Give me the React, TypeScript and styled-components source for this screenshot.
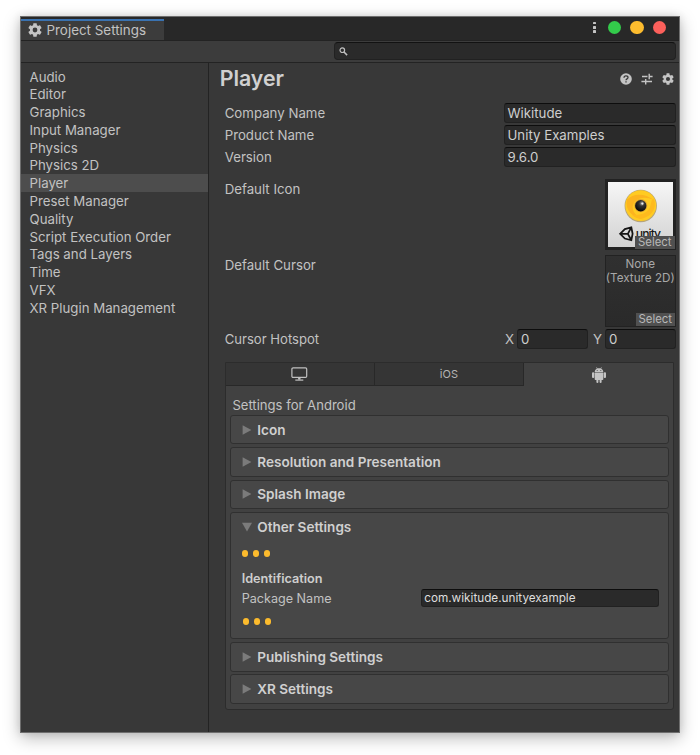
import React from 'react';
import styled, { createGlobalStyle } from 'styled-components';

const GlobalStyle = createGlobalStyle`
  *, *::before, *::after { box-sizing: border-box; }
  html, body { margin: 0; background: #fff; }
  body {
    height: 755px;
    overflow: hidden;
    font-family: Inter, sans-serif;
    font-size: 13.25px;
    color: #c2c2c2;
    -webkit-font-smoothing: antialiased;
  }
  svg { display: block; flex: none; }
`;

const Desktop = styled.div`
  height: 755px;
  padding: 16px 20px 22px;
`;

const Window = styled.main`
  width: 660px;
  height: 717px;
  display: flex;
  flex-direction: column;
  background: #383838;
  border: 1px solid #6e6e6e;
  box-shadow: 0 5px 16px rgba(0, 0, 0, 0.27), 0 0 8px rgba(0, 0, 0, 0.1);
`;

const TitleBar = styled.header`
  height: 22.5px;
  flex: none;
  display: flex;
  justify-content: space-between;
  align-items: flex-end;
  background: #282828;
`;

const WindowTab = styled.div`
  width: 143px;
  height: 20.5px;
  display: flex;
  align-items: center;
  gap: 4.5px;
  padding-left: 7px;
  background: #3c3c3c;
  border-top: 2px solid #3a72b0;
  font-size: 13.4px;
`;

const WindowControls = styled.div`
  height: 23px;
  display: flex;
  align-items: center;
  gap: 9px;
  padding: 0 13px 1.5px 0;
`;

const ControlDot = styled.span<{ $color: string }>`
  width: 13.4px;
  height: 13.4px;
  border-radius: 50%;
  background: ${(p) => p.$color};
`;

const MenuDots = styled.span`
  display: flex;
  flex-direction: column;
  gap: 1.6px;
  margin-right: 3px;
`;

const MenuDot = styled.span`
  width: 2.6px;
  height: 2.6px;
  border-radius: 0.6px;
  background: #c4c4c4;
`;

const Toolbar = styled.div`
  height: 23px;
  flex: none;
  display: flex;
  justify-content: flex-end;
  padding: 1.5px 3px 0 0;
  background: #3c3c3c;
  border-top: 1px solid #232323;
  border-bottom: 1px solid #232323;
`;

const SearchField = styled.div`
  width: 342.5px;
  height: 18px;
  display: flex;
  align-items: center;
  padding: 1px 0 0 4.5px;
  border: 1px solid #212121;
  border-top-color: #121212;
  border-radius: 4px;
  background: #2a2a2a;
`;

const Body = styled.div`
  flex: 1;
  min-height: 0;
  display: flex;
`;

const Sidebar = styled.nav`
  width: 188px;
  flex: none;
  padding-top: 5px;
  border-right: 1px solid #232323;
`;

const SidebarItem = styled.div<{ $selected: boolean }>`
  height: 17.8px;
  padding-left: 8.5px;
  line-height: 18px;
  background: ${(p) => (p.$selected ? '#4d4d4d' : 'transparent')};
`;

const Content = styled.section`
  flex: 1;
  min-width: 0;
  padding: 0 3px 0 15.7px;
`;

const PageHeader = styled.div`
  height: 40.5px;
  margin-left: -5px;
  display: flex;
  justify-content: space-between;
  align-items: flex-start;
`;

const PageTitle = styled.h1`
  margin: 0;
  padding-top: 1px;
  font-size: 21.3px;
  line-height: 28px;
  font-weight: 600;
  color: #d0d0d0;
`;

const HeaderIcons = styled.div`
  display: flex;
  align-items: center;
  gap: 9px;
  padding: 10px 2.5px 0 0;
`;

const FieldRow = styled.div<{ $gap?: number }>`
  height: ${(p) => 22.2 + (p.$gap ?? 0)}px;
  display: flex;
  justify-content: space-between;
  align-items: flex-start;
`;

const FieldLabel = styled.label`
  line-height: 21px;
`;

const TextBox = styled.div<{ $width: number }>`
  width: ${(p) => p.$width}px;
  height: 19.8px;
  padding-left: 3px;
  line-height: 18.4px;
  color: #cecece;
  background: #2a2a2a;
  border: 1px solid #212121;
  border-top-color: #0d0d0d;
  border-radius: 3px;
`;

const PreviewRow = styled(FieldRow)<{ $height: number }>`
  height: ${(p) => p.$height}px;
`;

const PreviewLabel = styled(FieldLabel)`
  line-height: 20px;
`;

const Preview = styled.div`
  position: relative;
  width: 71.5px;
  height: 71.5px;
  flex: none;
  border: 1.5px solid #222;
  background: linear-gradient(#303030, #2a2a2a);
  color: #a8a8a8;
  font-size: 11.7px;
  line-height: 13.3px;
  text-align: center;
  white-space: pre-line;
`;

const PreviewArt = styled(Preview)`
  border: 3px solid #222;
`;

const EmptyText = styled.div`
  margin: 2.2px -3px 0;
`;

const SelectTag = styled.span<{ $inset: number }>`
  position: absolute;
  right: ${(p) => p.$inset}px;
  bottom: ${(p) => p.$inset}px;
  width: 39.5px;
  height: 12.6px;
  font-size: 11.4px;
  line-height: 12.6px;
  color: #b8b8b8;
  background: #505050;
`;

const HotspotRow = styled.div`
  height: 33px;
  display: flex;
  align-items: flex-start;
`;

const HotspotLabel = styled(FieldLabel)`
  width: 280.5px;
  font-size: 13.1px;
`;

const AxisLabel = styled.span`
  line-height: 20px;
  width: 12px;
`;

const AxisGap = styled.span`
  width: 5.2px;
`;

const Platforms = styled.div`
  width: 449.5px;
  height: 348.5px;
  border: 1.2px solid #2c2c2c;
  border-radius: 0 0 3px 3px;
  background: #414141;
`;

const PlatformTabs = styled.div`
  height: 23.5px;
  display: grid;
  grid-template-columns: repeat(3, 1fr);
`;

const PlatformTab = styled.div<{ $active?: boolean }>`
  display: flex;
  align-items: center;
  justify-content: center;
  font-size: 11px;
  color: #b4b4b4;
  background: ${(p) => (p.$active ? '#414141' : '#353535')};
  border-right: ${(p) => (p.$active ? '0' : '1px solid #282828')};
  border-bottom: ${(p) => (p.$active ? '0' : '1px solid #282828')};
`;

const PlatformBody = styled.div`
  padding: 7.5px 4px 0 4.3px;
`;

const PlatformTitle = styled.div`
  height: 21px;
  padding-left: 2.4px;
  font-size: 13.1px;
  line-height: 22px;
`;

const Foldout = styled.section<{ $open?: boolean }>`
  height: ${(p) => (p.$open ? 127.3 : 29.6)}px;
  margin-bottom: 2.75px;
  border: 1.2px solid #303030;
  border-radius: 3px;
  background: #474747;
`;

const FoldoutHeader = styled.h2`
  height: 27.5px;
  margin: 0;
  display: flex;
  align-items: center;
  gap: 5.6px;
  padding-left: 10.7px;
  font-size: 13.55px;
  font-weight: 600;
  color: #d0d0d0;
`;

const FoldoutBody = styled.div`
  padding: 9.7px 9.5px 0 10.7px;
  font-size: 12.6px;
`;

const Ellipsis = styled.div<{ $shift?: number }>`
  display: flex;
  gap: 4.4px;
  padding-left: ${(p) => p.$shift ?? 0}px;
`;

const EllipsisDot = styled.span`
  width: 6.6px;
  height: 6.6px;
  border-radius: 50%;
  background: #fcbb2d;
`;

const GroupTitle = styled.h3`
  margin: 13.5px 0 0;
  font-size: 12.7px;
  line-height: 18px;
  font-weight: 600;
  color: #cecece;
`;

const PackageRow = styled.div`
  height: 29.3px;
  display: flex;
  justify-content: space-between;
  align-items: flex-start;
  margin-top: 0.6px;
  line-height: 19px;
`;

const PackageBox = styled(TextBox)`
  height: 18px;
  font-size: 11.75px;
  line-height: 17.5px;
  padding-left: 2px;
  color: #dedede;
`;

const GearIcon = ({ size }: { size: number }) => (
  <svg width={size} height={size} viewBox="2 2 20 20" fill="#c4c4c4">
    <path
      fillRule="evenodd"
      d="M19.14 12.94c.04-.3.06-.61.06-.94s-.02-.64-.07-.94l2.03-1.58c.18-.14.23-.41.12-.61l-1.92-3.32c-.12-.22-.37-.29-.59-.22l-2.39.96c-.5-.38-1.03-.7-1.62-.94l-.36-2.54c-.04-.24-.24-.41-.48-.41h-3.84c-.24 0-.43.17-.47.41l-.36 2.54c-.59.24-1.13.57-1.62.94l-2.39-.96c-.22-.08-.47 0-.59.22L2.74 8.87c-.12.21-.08.47.12.61l2.03 1.58c-.05.3-.09.63-.09.94s.02.64.07.94l-2.03 1.58c-.18.14-.23.41-.12.61l1.92 3.32c.12.22.37.29.59.22l2.39-.96c.5.38 1.03.7 1.62.94l.36 2.54c.05.24.24.41.48.41h3.84c.24 0 .44-.17.47-.41l.36-2.54c.59-.24 1.13-.56 1.62-.94l2.39.96c.22.08.47 0 .59-.22l1.92-3.32c.12-.22.07-.47-.12-.61zM12 15.4A3.4 3.4 0 1 1 12 8.6a3.4 3.4 0 0 1 0 6.8z"
    />
  </svg>
);

const SearchIcon = () => (
  <svg width="9" height="9" viewBox="0 0 9 9" fill="none" stroke="#c0c0c0">
    <circle cx="3.3" cy="3.2" r="2.3" strokeWidth="1.2" />
    <path d="M5 5l3.1 3.1" strokeWidth="1.5" />
  </svg>
);

const HelpIcon = () => (
  <svg width="12" height="12" viewBox="0 0 12 12">
    <circle cx="6" cy="6" r="5.8" fill="#c4c4c4" />
    <path
      d="M4 4.7c0-1.200.900-1.900 2-1.900s2 .7 2 1.700c0 1.400-2 1.400-2 2.800M6 8.200v1.400"
      fill="none"
      stroke="#383838"
      strokeWidth="1.3"
    />
  </svg>
);

const PresetIcon = () => (
  <svg width="12" height="12" viewBox="0 0 12 12" fill="none" stroke="#c4c4c4" strokeWidth="1.4">
    <path d="M1 3.500h5.500M7.500 3.500h4.100M8.200.700v5.600M.400 8.500h3.600M5 8.500h6M4.700 5.900v5.600" />
  </svg>
);

const MonitorIcon = () => (
  <svg width="17" height="14" viewBox="0 0 17 14" fill="none" stroke="#c0c0c0">
    <rect x=".9" y=".8" width="14.8" height="9.6" rx="1.2" strokeWidth="1.2" />
    <path d="M8.3 10.4v2.2" strokeWidth="2.4" />
    <path d="M4.3 13.1h8" strokeWidth="1.2" />
  </svg>
);

const AndroidIcon = () => (
  <svg width="14" height="16" viewBox="0 0 14 16" fill="#c4c4c4">
    <path d="M2.700 5C2.700 3.500 3.600 2.300 4.900 1.700L4.200.6l.5-.3.900 1.200c.9-.3 1.900-.3 2.800 0L9.300.3l.5.3-.7 1.100C10.400 2.300 11.300 3.500 11.300 5z" />
    <path d="M2.700 5.400h8.600v6.900a.7.700 0 0 1-.7.700H9.600v1.900a1 1 0 0 1-2 0V13H6.400v1.900a1 1 0 0 1-2 0V13h-1a.7.700 0 0 1-.7-.7z" />
    <rect x="0" y="5.200" width="2.300" height="5.800" rx="1" />
    <rect x="11.700" y="5.200" width="2.300" height="5.800" rx="1" />
    <circle cx="5.200" cy="3.500" r=".5" fill="#414141" />
    <circle cx="8.800" cy="3.500" r=".5" fill="#414141" />
  </svg>
);

const FoldArrow = ({ open }: { open?: boolean }) => (
  <svg width="10" height="10" viewBox="0 0 10 10" fill="#7b7b7b">
    <path d={open ? 'M0 .8h10L5 9.400z' : 'M.600.200v9.600L9.400 5z'} />
  </svg>
);

const AppArtwork = () => (
  <svg width="65.5" height="65.5" viewBox="0 0 66 66">
    <defs>
      <linearGradient id="paper" x2="0" y2="1">
        <stop offset="0" stopColor="#f6f6f6" />
        <stop offset="1" stopColor="#d2d2d2" />
      </linearGradient>
      <radialGradient id="pupil" cx=".6" cy=".3" r=".7">
        <stop offset="0" stopColor="#a8a8a8" />
        <stop offset=".35" stopColor="#333" />
        <stop offset="1" stopColor="#080808" />
      </radialGradient>
    </defs>
    <rect width="66" height="66" fill="url(#paper)" />
    <circle cx="33" cy="24.200" r="16.300" fill="#b5a47c" />
    <circle cx="33" cy="23.800" r="15.600" fill="#ffcb22" />
    <path d="M19 18C25 11 37 11 46 18C39 15 31 15 27 20C22 26 26 34 36 38C25 36 17 29 19 18z" fill="#fcb41f" />
    <path d="M46 17c4 9-2 18-12 20-5 0-8-2-10-4 7 1 15-1 18-7 2-4 1-8 4-9z" fill="#feba1e" />
    <circle cx="33" cy="23.800" r="6.600" fill="#e0a630" />
    <circle cx="33" cy="23.900" r="5.700" fill="url(#pupil)" />
    <circle cx="34.700" cy="21.700" r="1.100" fill="#eee" />
    <g fill="none" stroke="#161616" strokeWidth="1.800">
      <path d="M12.200 52.200L17 47.500l6.500-1.800 1.300 6.500-1.300 6.500L17 57zM12.200 52.200H20M20 52.200l3.500-6.500M20 52.200l3.500 6.500" />
    </g>
    <text x="28" y="56" fontFamily="Inter, sans-serif" fontSize="12.300" fontWeight="500" textLength="25.500" fill="#181818">
      unity
    </text>
  </svg>
);

const sections = [
  'Audio', 'Editor', 'Graphics', 'Input Manager', 'Physics', 'Physics 2D', 'Player',
  'Preset Manager', 'Quality', 'Script Execution Order', 'Tags and Layers', 'Time',
  'VFX', 'XR Plugin Management',
];

const fields = [
  { label: 'Company Name', value: 'Wikitude' },
  { label: 'Product Name', value: 'Unity Examples' },
  { label: 'Version', value: '9.6.0', gap: 9.1 },
];

const ThreeDots = ({ shift }: { shift?: number }) => (
  <Ellipsis $shift={shift}>
    <EllipsisDot />
    <EllipsisDot />
    <EllipsisDot />
  </Ellipsis>
);

const Fold = ({ title, children }: { title: string; children?: React.ReactNode }) => (
  <Foldout $open={!!children}>
    <FoldoutHeader>
      <FoldArrow open={!!children} />
      {title}
    </FoldoutHeader>
    {children && <FoldoutBody>{children}</FoldoutBody>}
  </Foldout>
);

export default function App() {
  return (
    <Desktop>
      <GlobalStyle />
      <Window>
        <TitleBar>
          <WindowTab>
            <GearIcon size={14} />
            Project Settings
          </WindowTab>
          <WindowControls>
            <MenuDots>
              <MenuDot />
              <MenuDot />
              <MenuDot />
            </MenuDots>
            <ControlDot $color="#33cb4b" />
            <ControlDot $color="#fdbc2e" />
            <ControlDot $color="#fc605b" />
          </WindowControls>
        </TitleBar>
        <Toolbar>
          <SearchField>
            <SearchIcon />
          </SearchField>
        </Toolbar>
        <Body>
          <Sidebar>
            {sections.map((name) => (
              <SidebarItem key={name} $selected={name === 'Player'}>
                {name}
              </SidebarItem>
            ))}
          </Sidebar>
          <Content>
            <PageHeader>
              <PageTitle>Player</PageTitle>
              <HeaderIcons>
                <HelpIcon />
                <PresetIcon />
                <GearIcon size={12} />
              </HeaderIcons>
            </PageHeader>
            {fields.map((f) => (
              <FieldRow key={f.label} $gap={f.gap}>
                <FieldLabel>{f.label}</FieldLabel>
                <TextBox $width={172.5}>{f.value}</TextBox>
              </FieldRow>
            ))}
            <PreviewRow $height={76.5}>
              <PreviewLabel>Default Icon</PreviewLabel>
              <PreviewArt>
                <AppArtwork />
                <SelectTag $inset={-1.5}>Select</SelectTag>
              </PreviewArt>
            </PreviewRow>
            <PreviewRow $height={73.7}>
              <PreviewLabel>Default Cursor</PreviewLabel>
              <Preview>
                <EmptyText>{'None\n(Texture 2D)'}</EmptyText>
                <SelectTag $inset={0}>Select</SelectTag>
              </Preview>
            </PreviewRow>
            <HotspotRow>
              <HotspotLabel>Cursor Hotspot</HotspotLabel>
              <AxisLabel>X</AxisLabel>
              <TextBox $width={71}>0</TextBox>
              <AxisGap />
              <AxisLabel>Y</AxisLabel>
              <TextBox $width={71}>0</TextBox>
            </HotspotRow>
            <Platforms>
              <PlatformTabs>
                <PlatformTab>
                  <MonitorIcon />
                </PlatformTab>
                <PlatformTab>iOS</PlatformTab>
                <PlatformTab $active>
                  <AndroidIcon />
                </PlatformTab>
              </PlatformTabs>
              <PlatformBody>
                <PlatformTitle>Settings for Android</PlatformTitle>
                <Fold title="Icon" />
                <Fold title="Resolution and Presentation" />
                <Fold title="Splash Image" />
                <Fold title="Other Settings">
                  <ThreeDots />
                  <GroupTitle>Identification</GroupTitle>
                  <PackageRow>
                    Package Name
                    <PackageBox $width={237.5}>com.wikitude.unityexample</PackageBox>
                  </PackageRow>
                  <ThreeDots shift={1} />
                </Fold>
                <Fold title="Publishing Settings" />
                <Fold title="XR Settings" />
              </PlatformBody>
            </Platforms>
          </Content>
        </Body>
      </Window>
    </Desktop>
  );
}
